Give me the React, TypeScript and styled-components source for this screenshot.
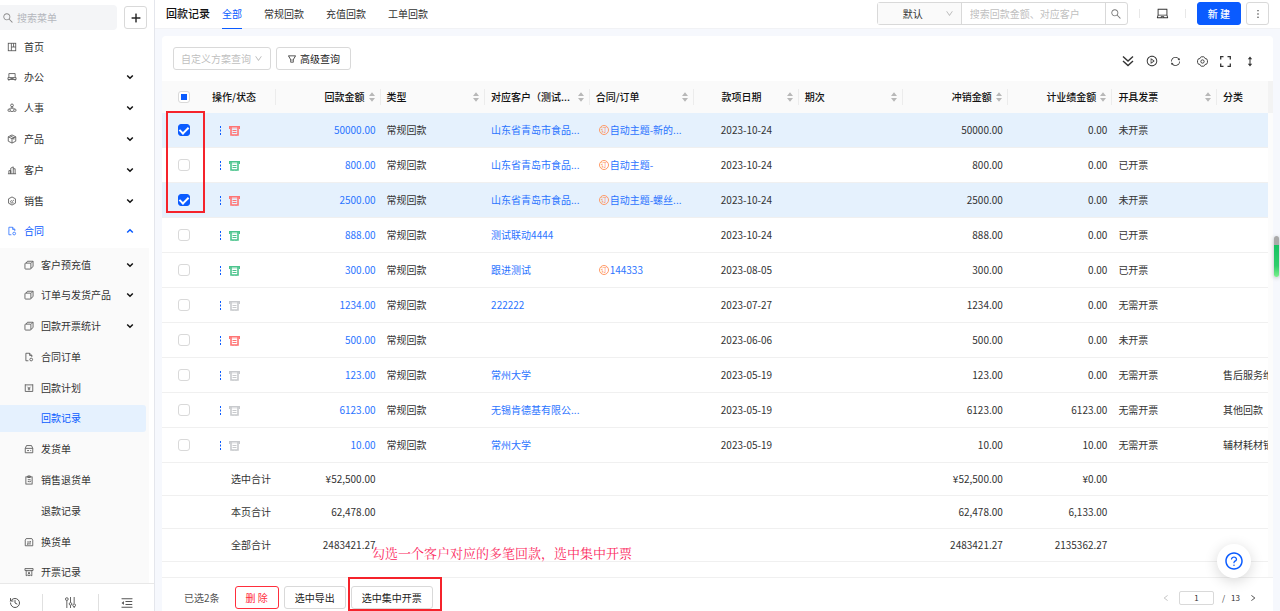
import React from "react";
import styled, { createGlobalStyle, css } from "styled-components";
import {
  AiOutlineSearch, AiOutlinePlus, AiOutlineDown, AiOutlineMore, AiOutlineLaptop, AiOutlineFilter,
  AiOutlineMenuFold, AiOutlinePlayCircle, AiOutlineSync,
  AiOutlineQuestionCircle, AiOutlineLeft, AiOutlineRight,
} from "react-icons/ai";
import { History } from "lucide-react";

const BLUE = "#0a5bff";
const LINK = "#2b74ff";
const RED = "#ff2e3c";

const GlobalStyle = createGlobalStyle`
  * { box-sizing: border-box; }
  body { margin: 0; background: #f6f8fd; }
  body, button, input, select {
    font-family: "Noto Sans CJK SC", sans-serif;
    font-size: 10px;
    line-height: 16px;
    color: #333;
  }
  button, input, select { margin: 0; }
  button { cursor: pointer; white-space: nowrap; }
  svg { display: block; flex: none; }
  a { text-decoration: none; color: inherit; }
  ul { list-style: none; margin: 0; padding: 0; }
`;

const Page = styled.div`
  display: flex;
  height: 100vh;
  overflow: hidden;
`;

/* ---------- sidebar ---------- */
const Sidebar = styled.aside`
  flex: none;
  width: 155px;
  display: flex;
  flex-direction: column;
  background: #fff;
  border-right: 1px solid #e4e6ec;
`;
const MenuSearch = styled.div`
  display: flex;
  align-items: center;
  justify-content: space-between;
  padding: 5px 7px 3px 0;
`;
const MenuSearchBox = styled.label`
  display: flex;
  align-items: center;
  gap: 3px;
  width: 117px;
  height: 25px;
  padding-left: 2px;
  border-radius: 0 4px 4px 0;
  background: #f4f5f7;
  color: #8c8c8c;
`;
const PlainInput = styled.input`
  flex: 1;
  min-width: 0;
  padding: 0;
  border: 0;
  outline: 0;
  background: transparent;
  &::placeholder { color: #b4b7bd; opacity: 1; }
`;
const MenuScroll = styled.nav`
  flex: 1;
  min-height: 0;
  overflow: hidden;
`;
const MenuList = styled.ul`
  display: flex;
  flex-direction: column;
  justify-content: space-between;
  height: 212px;
`;
const SubMenuList = styled(MenuList)`
  height: 338px;
  width: 149px;
  margin-top: 3px;
  padding-top: 3px;
  background: #fafafa;
`;
const MenuLink = styled.a<{ $sub?: boolean; $current?: boolean; $open?: boolean }>`
  display: grid;
  grid-template-columns: 10px 1fr 8px;
  align-items: center;
  column-gap: 7px;
  width: 146px;
  height: 27px;
  padding: 0 12px 0 ${(p) => (p.$sub ? 24 : 7)}px;
  border-radius: 0 3px 3px 0;
  white-space: nowrap;
  color: ${(p) => (p.$current || p.$open ? BLUE : "#333")};
  background: ${(p) => (p.$current ? "#e5f1fe" : "transparent")};
`;
const MenuFoot = styled.div`
  flex: none;
  display: grid;
  grid-template-columns: 43px 56px 1fr;
  height: 28px;
  padding-top: 10px;
  border-top: 1px solid #e8e8e8;
`;
const FootButton = styled.button<{ $first?: boolean }>`
  display: flex;
  align-items: center;
  justify-content: ${(p) => (p.$first ? "flex-start" : "center")};
  padding: 0 0 0 ${(p) => (p.$first ? 9 : 0)}px;
  border: 0;
  border-right: 1px solid #e0e0e0;
  background: none;
  color: #555;
  &:last-child { border-right: 0; }
`;

/* ---------- main ---------- */
const Main = styled.main`
  flex: 1;
  min-width: 0;
  display: flex;
  flex-direction: column;
`;
const Header = styled.header`
  flex: none;
  display: flex;
  align-items: flex-start;
  height: 29px;
  padding: 0 11px;
  background: #fff;
  border-bottom: 1px solid #f1f2f5;
`;
const Title = styled.h1`
  margin: 0 12px 0 0;
  font-size: 11px;
  line-height: 27px;
  font-weight: 500;
  color: #111;
  white-space: nowrap;
`;
const Tabs = styled.nav`
  display: flex;
  gap: 22px;
`;
const Tab = styled.a<{ $on?: boolean }>`
  height: 29px;
  line-height: 27px;
  white-space: nowrap;
  color: ${(p) => (p.$on ? BLUE : "#333")};
  border-bottom: 1px solid ${(p) => (p.$on ? BLUE : "transparent")};
`;
const HeaderTools = styled.div`
  display: flex;
  align-items: center;
  margin-left: auto;
  padding-top: 2px;
`;
const ButtonPair = styled.div`
  display: flex;
  gap: 5px;
`;
const controlBox = css`
  height: 23px;
  border: 1px solid #d9d9d9;
  border-radius: 3px;
  background: #fff;
`;
const Button = styled.button<{ $kind?: "primary" | "danger"; $square?: boolean }>`
  ${controlBox}
  flex: none;
  display: inline-flex;
  align-items: center;
  justify-content: center;
  gap: 3px;
  padding: 0 ${(p) => (p.$square ? 0 : 10)}px;
  width: ${(p) => (p.$square ? "23px" : "auto")};
  color: #222;
  ${(p) => p.$kind === "primary" && css`background: ${BLUE}; border-color: ${BLUE}; color: #fff; font-weight: 500;`}
  ${(p) => p.$kind === "danger" && css`border-color: ${RED}; color: ${RED};`}
`;
const SearchGroup = styled.div`
  ${controlBox}
  display: flex;
  width: 251px;
  color: #888;
`;
const SelectBox = styled.div<{ $framed?: boolean }>`
  ${(p) => p.$framed && controlBox}
  display: flex;
  align-items: center;
  flex: none;
  width: ${(p) => (p.$framed ? 98 : 84)}px;
  padding-right: 7px;
  background: ${(p) => (p.$framed ? "#fff" : "#fafafa")};
  border-right: 1px solid #d9d9d9;
  color: #b5b5b5;
`;
const Select = styled.select<{ $muted?: boolean }>`
  appearance: none;
  flex: 1;
  min-width: 0;
  border: 0;
  outline: 0;
  padding: 0 0 0 ${(p) => (p.$muted ? 7 : 3)}px;
  background: transparent;
  text-align: ${(p) => (p.$muted ? "left" : "center")};
  color: ${(p) => (p.$muted ? "#bfbfbf" : "#333")};
`;
const QueryInput = styled(PlainInput)`
  padding-left: 8px;
  &::placeholder { color: #bfbfbf; }
`;
const GroupButton = styled.button`
  display: flex;
  align-items: center;
  justify-content: center;
  width: 22px;
  padding: 0;
  border: 0;
  border-left: 1px solid #d9d9d9;
  background: none;
  color: #777;
`;
const IconButton = styled.button`
  display: flex;
  align-items: center;
  justify-content: center;
  padding: 0;
  border: 0;
  background: none;
  color: #333;
`;
const DeskButton = styled(IconButton)`
  padding: 0 5px;
`;
const Rule = styled.span`
  width: 1px;
  height: 9px;
  margin: 0 11px;
  background: #e8e8e8;
`;

const Card = styled.section`
  flex: 1;
  min-height: 0;
  display: flex;
  flex-direction: column;
  margin: 7px 7px 0;
  border-radius: 4px 4px 0 0;
  background: #fff;
`;
const Toolbar = styled.div`
  flex: none;
  display: flex;
  align-items: center;
  gap: 5px;
  height: 45px;
  padding: 0 20px 0 11px;
`;
const ToolIcons = styled.div`
  display: flex;
  align-items: center;
  gap: 16px;
  margin-left: auto;
  padding-top: 5px;
`;
const IconRun = styled.div`
  display: flex;
  gap: 12px;
`;

/* ---------- table ---------- */
type Align = "left" | "right" | "center";

const TableArea = styled.div`
  position: relative;
  flex: 1;
  min-height: 0;
  display: flex;
  align-items: flex-start;
`;
const Table = styled.table`
  flex: 1;
  min-width: 0;
  width: 100%;
  table-layout: fixed;
  border-collapse: separate;
  border-spacing: 0;
`;
const Gutter = styled.div`
  flex: none;
  align-self: stretch;
  width: 5px;
  background: linear-gradient(#f3f3f3 0 32px, #fcfcfc 32px);
`;
const Col = styled.col<{ $w?: number }>`
  width: ${(p) => (p.$w ? p.$w + "px" : "auto")};
`;
const Th = styled.th`
  height: 32px;
  padding: 0;
  background: #fafafa;
  font-weight: 500;
  color: #111;
`;
const HeadCell = styled.div<{ $line?: boolean }>`
  display: flex;
  align-items: center;
  height: 16px;
  padding: 0 5px 0 6px;
  gap: 4px;
  white-space: nowrap;
  border-right: 1px solid ${(p) => (p.$line === false ? "transparent" : "#ececec")};
`;
const HeadText = styled.span<{ $align?: Align }>`
  flex: 1;
  min-width: 0;
  text-align: ${(p) => p.$align || "left"};
`;
const Row = styled.tr<{ $on?: boolean; $total?: boolean }>`
  height: ${(p) => (p.$total ? 33 : 35)}px;
  background: ${(p) => (p.$on ? "#e5f1fd" : "#fff")};
`;
const Td = styled.td<{ $align?: Align; $link?: boolean }>`
  padding: 0 0 0 6px;
  ${(p) => p.$align === "right" && css`padding-right: 5px;`}
  ${(p) => p.$align === "center" && css`padding-left: 0;`}
  border-bottom: 1px solid #f0f0f0;
  text-align: ${(p) => p.$align || "left"};
  white-space: nowrap;
  overflow: hidden;
  text-overflow: clip;
  color: ${(p) => (p.$link ? LINK : "#333")};
`;
const Contract = styled.a`
  display: flex;
  align-items: center;
  gap: 1px;
  padding-left: 3px;
`;
const OrderMark = styled.span`
  flex: none;
  width: 10px;
  height: 10px;
  border: 1px solid #ff9a66;
  border-radius: 50%;
  color: #ff7f45;
  font-size: 6px;
  line-height: 8px;
  text-align: center;
`;
const RowActions = styled.div`
  display: flex;
  align-items: center;
  gap: 7px;
  padding-left: 7px;
`;
const Check = styled.input`
  appearance: none;
  display: block;
  width: 12px;
  height: 12px;
  margin: 0 auto;
  border: 1px solid #d9d9d9;
  border-radius: 3px;
  background: #fff;
  &:checked { background: ${BLUE}; border-color: ${BLUE}; }
  &:checked::before {
    content: "";
    display: block;
    width: 4px;
    height: 7px;
    margin: 0 auto;
    border: solid #fff;
    border-width: 0 2px 2px 0;
    transform: rotate(45deg);
  }
  &:indeterminate::before {
    content: "";
    display: block;
    width: 6px;
    height: 6px;
    margin: 2px;
    background: ${BLUE};
  }
`;

/* ---------- footer ---------- */
const Footer = styled.footer`
  position: relative;
  flex: none;
  display: flex;
  align-items: center;
  gap: 5px;
  height: 34px;
  padding: 6px 12px 0 22px;
  border-top: 1px solid #f0f0f0;
`;
const Selected = styled.span`
  margin-right: 10px;
  color: #555;
  white-space: nowrap;
`;
const Marked = styled.span`
  position: relative;
  display: flex;
`;
const frame = css`
  position: absolute;
  border: 2px solid #f5232b;
  pointer-events: none;
`;
const ButtonFrame = styled.span`
  ${frame}
  inset: -9px -9px -2px -3px;
`;
const CheckFrame = styled.div`
  ${frame}
  left: 4px;
  top: 30px;
  width: 39px;
  height: 102px;
`;
const Note = styled.p`
  position: absolute;
  left: 210px;
  bottom: 48px;
  margin: 0;
  font-family: SimSun, "Noto Serif CJK SC", "Noto Sans CJK SC", serif;
  font-size: 13px;
  line-height: 20px;
  color: #fb2a60;
  white-space: nowrap;
`;
const Pager = styled.div`
  display: flex;
  align-items: center;
  margin-left: auto;
  padding-right: 4px;
  font-size: 8px;
`;
const PageInput = styled.input`
  width: 35px;
  height: 14px;
  margin: 0 8px 0 9px;
  padding: 0;
  border: 1px solid #d9d9d9;
  border-radius: 2px;
  font-size: 8px;
  line-height: 12px;
  text-align: center;
`;
const PageCount = styled.span`
  margin: 0 9px 0 6px;
`;
const Help = styled.button`
  position: fixed;
  right: 29px;
  bottom: 33px;
  display: flex;
  align-items: center;
  justify-content: center;
  width: 34px;
  height: 34px;
  padding: 0;
  border: 0;
  border-radius: 50%;
  background: #fff;
  color: ${BLUE};
  box-shadow: 0 3px 14px rgba(0, 0, 0, 0.16);
`;
const SideHandle = styled.div`
  position: fixed;
  right: 1px;
  top: 236px;
  width: 5px;
  height: 41px;
  border-radius: 3px;
  background: linear-gradient(#a9a9a9 0 9px, #16c262 9px, #2fce6b 30px, #7cf08c);
  box-shadow: 0 1px 4px rgba(0, 0, 0, 0.25);
`;

/* ---------- icons ---------- */
type GlyphName =
  | "home" | "desk" | "people" | "box" | "chart" | "sales" | "doc" | "stack"
  | "plan" | "ship" | "clip" | "swap" | "ticket";

const glyphs: Record<GlyphName, React.ReactNode> = {
  home: <><rect x="2" y="2" width="12" height="12" /><path d="M7 2v12M7 8h7M10.500 2v6" /></>,
  desk: <><path d="M3 9V2.500h10V9M1.500 9h13v3h-13zM3 12v2M13 12v2M6 9v1.500h4V9" /></>,
  people: <><circle cx="8" cy="3.800" r="2.200" /><path d="M8 6v3M4 9.500c1-2 7-2 8 0" /><circle cx="3.500" cy="11.500" r="2" /><circle cx="12.500" cy="11.500" r="2" /><path d="M5.500 13.500h5" /></>,
  box: <><path d="M8 1.500l6 3v7l-6 3-6-3v-7zM2 4.500l6 3 6-3M8 7.500v7M5 3l6 3v3" /></>,
  chart: <><path d="M1.500 14h13M3 14V9h3v5M6 14V5l4-2v11M10 6h3v8" /></>,
  sales: <><path d="M8 1.500l5.500 3v7l-5.500 3-5.500-3v-7z" /><path d="M5 9l2-1.500 1.500 1L11 6.500M5.500 11h5" /></>,
  doc: <><path d="M7 14H3V2h6l3.500 3.500V8M9 2v3.500h3.500" /><circle cx="11.500" cy="12" r="2.200" /></>,
  stack: <><rect x="1.500" y="5" width="9.500" height="9.500" rx="1" /><path d="M3.500 5l2-3H14.500V10.500L11 13.500M11 5.500l3-3" /></>,
  plan: <><path d="M2 3h12v10.500H2zM2 3V2M14 3V2M5.500 6L8 8.500 10.500 6M8 8.500V12M6 9.500h4" /></>,
  ship: <><path d="M2 7l2-4.500h8L14 7M2 7h12v7H2zM5 10.500h3M10 10.500h1.500" /></>,
  clip: <><rect x="3" y="3" width="10" height="11.500" /><path d="M6 1.500h4v2.500H6zM6 7.500h4.500M6 10.500h3M11 9l-1.500 2.500" /></>,
  swap: <><path d="M2 5l1.500-2.500h9L14 5v9H2zM5 8h6L9.500 6.800M11 11H5l1.500 1.200" /></>,
  ticket: <><path d="M1.500 2.500h13v3h-13zM3.500 5.500V14l2-1 2.500 1 2.500-1 2 1V5.500M6 7.500l2 1.500 2-1.500M8 9v3M6.500 10.500h3" /></>,
};

const Glyph = ({ name }: { name?: GlyphName }) => (
  <svg width="10" height="10" viewBox="0 0 16 16" fill="none" stroke="currentColor" strokeWidth="1.3" opacity="0.85">
    {name && glyphs[name]}
  </svg>
);
const Chevron = ({ up }: { up?: boolean }) => (
  <svg width="8" height="8" viewBox="0 0 8 8" fill="none" stroke={up ? BLUE : "#111"} strokeWidth="1.5">
    <path d={up ? "M1.200 5.500L4 2.700l2.800 2.800" : "M1.200 2.500L4 5.300l2.800-2.800"} />
  </svg>
);
const Sorter = () => (
  <svg width="6" height="10" viewBox="0 0 6 10" fill="#b8b8b8">
    <path d="M3 0.300L6 4H0zM3 9.700L0 6h6z" />
  </svg>
);
const Receipt = ({ color }: { color: string }) => (
  <svg width="11" height="11" viewBox="0 0 11 11" fill="none" stroke={color}>
    <path d="M0 1h11v2.500H0z" fill={color} fillOpacity="0.55" stroke="none" />
    <path d="M0 1.500h11M0.500 1v3M10.500 1v3" />
    <path d="M2 2v8h7V2" strokeWidth="1.600" />
    <path d="M3.500 5.500h4M3.500 7.500h4" />
    <path d="M3.500 10.500h1M6.500 10.500h1" />
  </svg>
);
const Dots = () => (
  <svg width="3" height="9" viewBox="0 0 3 9" fill={BLUE}>
    <rect x="1" y="0" width="1" height="2" /><rect x="1" y="3.500" width="1" height="2" /><rect x="1" y="7" width="1" height="2" />
  </svg>
);
const DoubleDown = () => (
  <svg width="12" height="12" viewBox="0 0 12 12" fill="none" stroke="currentColor" strokeWidth="1.400">
    <path d="M1 1.500l5 4.500 5-4.500M1 6l5 4.500L11 6" />
  </svg>
);
const HexGear = () => (
  <svg width="11" height="11" viewBox="0 0 12 12" fill="none" stroke="currentColor">
    <path d="M3.800 1.500L4.600 0.900h2.800l0.800 0.600 0.600 1.300 1.700 0.300 0.900 1.900v2l-0.900 1.900-1.700 0.300-0.600 1.300-0.800 0.600H4.600l-0.800-0.600-0.600-1.300-1.700-0.300L0.600 7V5l0.900-1.900 1.700-0.300z" />
    <circle cx="6" cy="6" r="1.800" />
  </svg>
);
const Expand = () => (
  <svg width="11" height="11" viewBox="0 0 11 11" fill="none" stroke="currentColor" strokeWidth="1.300">
    <path d="M0.700 3.500V0.700h2.800M7.500 0.700h2.800v2.800M10.300 7.500v2.800H7.500M3.500 10.300H0.700V7.500" />
  </svg>
);
const UpDown = () => (
  <svg width="6" height="11" viewBox="0 0 6 11" fill="currentColor">
    <path d="M3 0.500L5.200 3.300H0.800zM3 10.500L0.800 7.700h4.400zM2.500 3h1v5h-1z" />
  </svg>
);
const Sliders = () => (
  <svg width="11" height="11" viewBox="0 0 12 12" fill="none" stroke="currentColor">
    <path d="M2 4V12M6 0v6M6 9v3M10 0v7M10 10.500v1.500" />
    <circle cx="2" cy="2.300" r="1.500" /><circle cx="6" cy="7.500" r="1.400" /><circle cx="10" cy="9" r="1.500" />
  </svg>
);

/* ---------- data ---------- */
type MenuEntry = { text: string; icon?: GlyphName; arrow?: "up" | "down"; current?: boolean };
const menu: MenuEntry[] = [
  { text: "首页", icon: "home" },
  { text: "办公", icon: "desk", arrow: "down" },
  { text: "人事", icon: "people", arrow: "down" },
  { text: "产品", icon: "box", arrow: "down" },
  { text: "客户", icon: "chart", arrow: "down" },
  { text: "销售", icon: "sales", arrow: "down" },
  { text: "合同", icon: "doc", arrow: "up" },
];
const subMenu: MenuEntry[] = [
  { text: "客户预充值", icon: "stack", arrow: "down" },
  { text: "订单与发货产品", icon: "stack", arrow: "down" },
  { text: "回款开票统计", icon: "stack", arrow: "down" },
  { text: "合同订单", icon: "doc" },
  { text: "回款计划", icon: "plan" },
  { text: "回款记录", current: true },
  { text: "发货单", icon: "ship" },
  { text: "销售退货单", icon: "clip" },
  { text: "退款记录" },
  { text: "换货单", icon: "swap" },
  { text: "开票记录", icon: "ticket" },
];

const columns: { text: string; align?: Align; sort?: boolean; width?: number }[] = [
  { text: "操作/状态", width: 70 },
  { text: "回款金额", align: "right", sort: true },
  { text: "类型", sort: true },
  { text: "对应客户（测试...", sort: true },
  { text: "合同/订单", sort: true },
  { text: "款项日期", align: "center", sort: true },
  { text: "期次", sort: true },
  { text: "冲销金额", align: "right", sort: true },
  { text: "计业绩金额", align: "right", sort: true },
  { text: "开具发票", sort: true },
  { text: "分类", width: 51 },
];

const tone = { red: "#ff7474", green: "#4cc48d", gray: "#c8cacd" };
type Rec = {
  on?: boolean; tone: keyof typeof tone; amount: string; customer: string; contract?: string;
  date: string; score: string; invoice: string; kind?: string;
};
const records: Rec[] = [
  { on: true, tone: "red", amount: "50000.00", customer: "山东省青岛市食品...", contract: "自动主题-新的...", date: "2023-10-24", score: "0.00", invoice: "未开票" },
  { tone: "green", amount: "800.00", customer: "山东省青岛市食品...", contract: "自动主题-", date: "2023-10-24", score: "0.00", invoice: "已开票" },
  { on: true, tone: "red", amount: "2500.00", customer: "山东省青岛市食品...", contract: "自动主题-螺丝...", date: "2023-10-24", score: "0.00", invoice: "未开票" },
  { tone: "green", amount: "888.00", customer: "测试联动4444", date: "2023-10-24", score: "0.00", invoice: "已开票" },
  { tone: "green", amount: "300.00", customer: "跟进测试", contract: "144333", date: "2023-08-05", score: "0.00", invoice: "已开票" },
  { tone: "gray", amount: "1234.00", customer: "222222", date: "2023-07-27", score: "0.00", invoice: "无需开票" },
  { tone: "red", amount: "500.00", customer: "", date: "2023-06-06", score: "0.00", invoice: "未开票" },
  { tone: "gray", amount: "123.00", customer: "常州大学", date: "2023-05-19", score: "0.00", invoice: "无需开票", kind: "售后服务维" },
  { tone: "gray", amount: "6123.00", customer: "无锡肯德基有限公...", date: "2023-05-19", score: "6123.00", invoice: "无需开票", kind: "其他回款" },
  { tone: "gray", amount: "10.00", customer: "常州大学", date: "2023-05-19", score: "10.00", invoice: "无需开票", kind: "辅材耗材销" },
];
const totals = [
  { label: "选中合计", amount: "¥52,500.00", score: "¥0.00" },
  { label: "本页合计", amount: "62,478.00", score: "6,133.00" },
  { label: "全部合计", amount: "2483421.27", score: "2135362.27" },
];

const MenuRow = ({ item, sub }: { item: MenuEntry; sub?: boolean }) => (
  <li>
    <MenuLink href="#" $sub={sub} $current={item.current} $open={item.arrow === "up"}>
      <Glyph name={item.icon} />
      <span>{item.text}</span>
      {item.arrow && <Chevron up={item.arrow === "up"} />}
    </MenuLink>
  </li>
);

const setMixed = (el: HTMLInputElement | null) => {
  if (el) el.indeterminate = true;
};

export default function App() {
  return (
    <Page>
      <GlobalStyle />
      <Sidebar>
        <MenuSearch>
          <MenuSearchBox>
            <AiOutlineSearch size={12} />
            <PlainInput aria-label="搜索菜单" placeholder="搜索菜单" />
          </MenuSearchBox>
          <Button $square aria-label="添加"><AiOutlinePlus size={12} stroke="currentColor" strokeWidth={40} /></Button>
        </MenuSearch>
        <MenuScroll>
          <MenuList>{menu.map((m) => <MenuRow key={m.text} item={m} />)}</MenuList>
          <SubMenuList>{subMenu.map((m) => <MenuRow key={m.text} item={m} sub />)}</SubMenuList>
        </MenuScroll>
        <MenuFoot>
          <FootButton $first aria-label="历史"><History size={12} strokeWidth={2} /></FootButton>
          <FootButton aria-label="设置"><Sliders /></FootButton>
          <FootButton aria-label="收起"><AiOutlineMenuFold size={14} /></FootButton>
        </MenuFoot>
      </Sidebar>

      <Main>
        <Header>
          <Title>回款记录</Title>
          <Tabs>
            <Tab href="#" $on>全部</Tab>
            <Tab href="#">常规回款</Tab>
            <Tab href="#">充值回款</Tab>
            <Tab href="#">工单回款</Tab>
          </Tabs>
          <HeaderTools>
            <SearchGroup>
              <SelectBox>
                <Select aria-label="搜索方式"><option>默认</option></Select>
                <AiOutlineDown size={9} />
              </SelectBox>
              <QueryInput aria-label="搜索" placeholder="搜索回款金额、对应客户" />
              <GroupButton aria-label="搜索"><AiOutlineSearch size={12} /></GroupButton>
            </SearchGroup>
            <Rule />
            <DeskButton aria-label="桌面"><AiOutlineLaptop size={13} /></DeskButton>
            <Rule />
            <ButtonPair>
              <Button $kind="primary">新 建</Button>
              <Button $square aria-label="更多"><AiOutlineMore size={12} /></Button>
            </ButtonPair>
          </HeaderTools>
        </Header>

        <Card>
          <Toolbar>
            <SelectBox $framed>
              <Select $muted aria-label="自定义方案查询"><option>自定义方案查询</option></Select>
              <AiOutlineDown size={9} />
            </SelectBox>
            <Button><AiOutlineFilter size={10} />高级查询</Button>
            <ToolIcons>
              <IconRun>
                <IconButton aria-label="展开"><DoubleDown /></IconButton>
                <IconButton aria-label="播放"><AiOutlinePlayCircle size={12} /></IconButton>
                <IconButton aria-label="刷新"><AiOutlineSync size={11} /></IconButton>
              </IconRun>
              <IconRun>
                <IconButton aria-label="设置"><HexGear /></IconButton>
                <IconButton aria-label="全屏"><Expand /></IconButton>
              </IconRun>
              <IconButton aria-label="行高"><UpDown /></IconButton>
            </ToolIcons>
          </Toolbar>

          <TableArea>
            <Table>
              <colgroup>
                <Col $w={44} />
                {columns.map((c) => <Col key={c.text} $w={c.width} />)}
              </colgroup>
              <thead>
                <tr>
                  <Th><Check type="checkbox" ref={setMixed} aria-label="全选" /></Th>
                  {columns.map((c, i) => (
                    <Th key={c.text} scope="col">
                      <HeadCell $line={i < columns.length - 1}>
                        <HeadText $align={c.align}>{c.text}</HeadText>
                        {c.sort && <Sorter />}
                      </HeadCell>
                    </Th>
                  ))}
                </tr>
              </thead>
              <tbody>
                {records.map((r) => (
                  <Row key={r.amount} $on={r.on}>
                    <Td $align="center"><Check type="checkbox" defaultChecked={r.on} aria-label={r.amount} /></Td>
                    <Td>
                      <RowActions>
                        <Dots />
                        <Receipt color={tone[r.tone]} />
                      </RowActions>
                    </Td>
                    <Td $align="right" $link><a href="#">{r.amount}</a></Td>
                    <Td>常规回款</Td>
                    <Td $link>{r.customer && <a href="#">{r.customer}</a>}</Td>
                    <Td $link>
                      {r.contract && <Contract href="#"><OrderMark>订</OrderMark>{r.contract}</Contract>}
                    </Td>
                    <Td $align="center">{r.date}</Td>
                    <Td />
                    <Td $align="right">{r.amount}</Td>
                    <Td $align="right">{r.score}</Td>
                    <Td>{r.invoice}</Td>
                    <Td>{r.kind}</Td>
                  </Row>
                ))}
                {totals.map((t) => (
                  <Row key={t.label} $total>
                    <Td colSpan={2} $align="right">{t.label}</Td>
                    <Td $align="right">{t.amount}</Td>
                    <Td colSpan={5} />
                    <Td $align="right">{t.amount}</Td>
                    <Td $align="right">{t.score}</Td>
                    <Td colSpan={2} />
                  </Row>
                ))}
              </tbody>
            </Table>
            <Gutter />
            <CheckFrame />
          </TableArea>

          <Footer>
            <Selected>已选2条</Selected>
            <Button $kind="danger">删 除</Button>
            <Button>选中导出</Button>
            <Marked>
              <Button>选中集中开票</Button>
              <ButtonFrame />
            </Marked>
            <Note>勾选一个客户对应的多笔回款，选中集中开票</Note>
            <Pager>
              <IconButton aria-label="上一页" disabled><AiOutlineLeft size={8} color="#bbb" /></IconButton>
              <PageInput aria-label="页码" defaultValue="1" />
              <span>/</span>
              <PageCount>13</PageCount>
              <IconButton aria-label="下一页"><AiOutlineRight size={8} /></IconButton>
            </Pager>
          </Footer>
        </Card>
      </Main>
      <Help aria-label="帮助"><AiOutlineQuestionCircle size={20} /></Help>
      <SideHandle />
    </Page>
  );
}
